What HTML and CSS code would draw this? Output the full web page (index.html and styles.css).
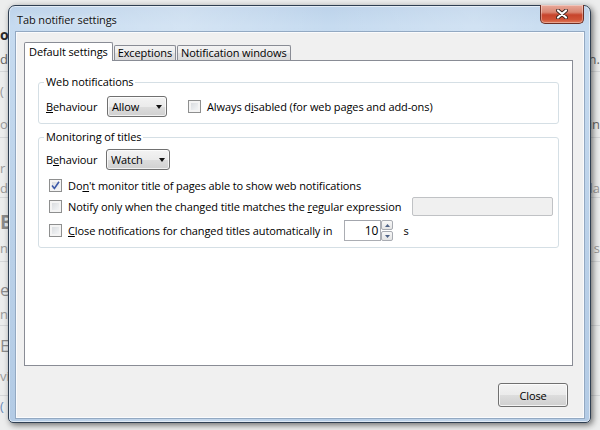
FILE: index.html
```html
<!DOCTYPE html>
<html lang="en">
<head>
<meta charset="utf-8">
<title>Tab notifier settings</title>
<link rel="stylesheet" href="styles.css">
</head>
<body>
<div class="desk">
  <div class="page">
    <div class="prow h24"></div>
    <div class="prow h22"><span class="pt strong">o</span><span></span></div>
    <div class="prow h26 line"><span class="pt">d</span><span class="pt">n.</span></div>
    <div class="prow h38"><span class="pt faint">(</span><span></span></div>
    <div class="prow h28 line"><span class="pt faint">ov</span><span class="pt">in</span></div>
    <div class="prow h20"></div>
    <div class="prow h20"><span class="pt faint">r</span><span></span></div>
    <div class="prow h20 line"><span class="pt faint">d</span><span class="pt faint">da</span></div>
    <div class="prow h12"></div>
    <div class="prow h24"><span class="pt big">Bi</span><span></span></div>
    <div class="prow h28 line"><span class="pt faint">n</span><span class="pt faint">s</span></div>
    <div class="prow h16"></div>
    <div class="prow h24"><span class="pt mid">e</span><span></span></div>
    <div class="prow h24 line"><span class="pt faint">n</span><span></span></div>
    <div class="prow h10"></div>
    <div class="prow h20"><span class="pt mid">E</span><span></span></div>
    <div class="prow h40 line"><span class="pt faint">vi</span><span></span></div>
    <div class="prow h20"><span class="pt link">(</span><span></span></div>
  </div>

  <div class="window">
    <div class="titlebar">
      <span class="title">Tab notifier settings</span>
      <button class="wclose" aria-label="Close">
        <svg width="12" height="10" viewBox="0 0 12 10">
          <path d="M2 1.5 L10 8.5 M10 1.5 L2 8.5" stroke="#3b2420" stroke-width="4" stroke-linecap="round"/>
          <path d="M2 1.5 L10 8.5 M10 1.5 L2 8.5" stroke="#ffffff" stroke-width="2.2" stroke-linecap="round"/>
        </svg>
      </button>
    </div>
    <div class="client">
      <div class="tabs">
        <div class="tab sel">Default settings</div>
        <div class="tab">Exceptions</div>
        <div class="tab">Notification windows</div>
      </div>
      <div class="panel">
        <fieldset class="group g1">
          <legend>Web notifications</legend>
          <div class="row first1">
            <span class="lbl"><u>B</u>ehaviour</span>
            <div class="select s-allow"><span>Allow</span><i class="arrow"></i></div>
            <label class="check push"><span class="box"></span><span>Always d<u>i</u>sabled (for web pages and add-ons)</span></label>
          </div>
        </fieldset>
        <fieldset class="group g2">
          <legend>Monitoring of titles</legend>
          <div class="row first2">
            <span class="lbl">B<u>e</u>haviour</span>
            <div class="select s-watch"><span>Watch</span><i class="arrow"></i></div>
          </div>
          <div class="row crow r1">
            <label class="check"><span class="box on">
              <svg width="9" height="9" viewBox="0 0 9 9"><path d="M1 4.6 L3.4 7.5 L8 0.8" fill="none" stroke="#3c59a8" stroke-width="1.6"/></svg>
            </span><span>Do<u>n</u>'t monitor title of pages able to show web notifications</span></label>
          </div>
          <div class="row crow r2">
            <label class="check"><span class="box"></span><span>Notify only when the changed title matches the <u>r</u>egular expression</span></label>
            <input class="regex" type="text" disabled>
          </div>
          <div class="row crow r3">
            <label class="check"><span class="box"></span><span><u>C</u>lose notifications for changed titles automatically in</span></label>
            <div class="spin">
              <span class="spinval">10</span>
              <span class="spinbtns">
                <span class="sb up"><svg width="5" height="3" viewBox="0 0 5 3"><path d="M0 3 L2.5 0 L5 3Z" fill="#4d6185"/></svg></span>
                <span class="sb down"><svg width="5" height="3" viewBox="0 0 5 3"><path d="M0 0 L2.5 3 L5 0Z" fill="#4d6185"/></svg></span>
              </span>
            </div>
            <span class="unit">s</span>
          </div>
        </fieldset>
      </div>
      <div class="footer">
        <button class="btn">Close</button>
      </div>
    </div>
  </div>
</div>
</body>
</html>
```

FILE: styles.css
```css
html, body {
  margin: 0;
  padding: 0;
}
body {
  width: 600px;
  height: 430px;
  overflow: hidden;
  font-family: "Open Sans", "Noto Sans", sans-serif;
  font-size: 11px;
  letter-spacing: -0.1px;
  color: #000;
}
.desk {
  position: relative;
  width: 600px;
  height: 430px;
  background: #eceded;
}

/* background page (only slivers visible) */
.page {
  display: flex;
  flex-direction: column;
  width: 600px;
  height: 430px;
  font-size: 13px;
  letter-spacing: 0;
  color: #666;
}
.prow {
  display: flex;
  justify-content: space-between;
  align-items: center;
  box-sizing: border-box;
}
.prow.line { border-bottom: 1px solid #d5d7d9; }
.h10 { height: 10px; } .h12 { height: 12px; } .h16 { height: 16px; }
.h20 { height: 20px; } .h22 { height: 22px; } .h24 { height: 24px; }
.h26 { height: 26px; } .h28 { height: 28px; } .h38 { height: 38px; }
.h40 { height: 40px; }
.pt { line-height: 16px; }
.pt.strong { font-weight: 700; color: #2a2a2a; font-size: 14px; }
.pt.faint { color: #9a9a9a; }
.pt.big { font-weight: 700; color: #8a8a8a; font-size: 19px; }
.pt.mid { color: #8c8c8c; font-size: 17px; }
.pt.link { color: #6a8ab8; }

/* window */
.window {
  position: absolute;
  left: 8px;
  top: 5px;
  width: 583px;
  height: 418px;
  box-sizing: border-box;
  border: 1px solid #2f3f52;
  border-radius: 7px 7px 5px 5px;
  background:
    linear-gradient(90deg, rgba(255,255,255,0) 0, rgba(255,255,255,.25) 30%, rgba(255,255,255,0) 55%, rgba(255,255,255,.2) 80%, rgba(255,255,255,0) 100%),
    linear-gradient(180deg, #bdd3ea 0, #c6dbf0 20px, #b9d0e8 60%, #b3cbe5 100%);
  padding: 0 6px 4px 7px;
  display: flex;
  flex-direction: column;
  box-shadow: 2px 2px 6px rgba(0,0,0,.55), inset 0 0 0 1px rgba(255,255,255,.55);
}
.titlebar {
  height: 26px;
  display: flex;
  justify-content: space-between;
  align-items: flex-start;
  flex: none;
}
.title {
  margin-top: 6px;
  margin-left: 1px;
  line-height: 15px;
  font-size: 11px;
  color: #111;
  text-shadow: 0 0 6px rgba(255,255,255,.9);
}
.wclose {
  margin-top: -1px;
  width: 44px;
  height: 19px;
  padding: 0;
  border: 1px solid #6d2f25;
  border-top: none;
  border-radius: 0 0 5px 5px;
  background: linear-gradient(180deg, #e9a99a 0, #d98672 40%, #c7442c 55%, #cf5236 80%, #e07a5a 100%);
  box-shadow: inset 0 0 0 1px rgba(255,255,255,.35);
  display: flex;
  align-items: center;
  justify-content: center;
}

.client {
  flex: 1;
  display: flex;
  flex-direction: column;
  background: #f0f0f0;
  border: 1px solid #fafbfd;
  box-shadow: 0 0 0 1px #93a9c2;
  padding: 9px 10px 0 7px;
}

/* tabs */
.tabs {
  display: flex;
  align-items: flex-end;
  height: 18px;
  flex: none;
}
.tab {
  box-sizing: border-box;
  height: 15px;
  line-height: 14px;
  padding: 0 3px;
  border: 1px solid #898c95;
  border-bottom: none;
  margin-left: 1px;
  background: linear-gradient(180deg, #f4f4f4 0, #ececec 50%, #e2e2e2 51%, #dadada 100%);
  border-radius: 2px 2px 0 0;
}
.tab.sel {
  height: 19px;
  line-height: 18px;
  margin-left: 0;
  margin-bottom: -1px;
  padding: 0 4px;
  background: #fff;
  position: relative;
  z-index: 1;
}

.panel {
  flex: 1;
  background: #fff;
  border: 1px solid #898c95;
  padding: 0 13px;
}

/* group boxes */
.group {
  border: 1px solid #d5dfe5;
  border-radius: 3px;
  margin: 0;
  padding: 0 5px 6px 7px;
}
.group legend {
  line-height: 16px;
  padding: 0 2px;
  margin-left: -2px;
}
.g1 { margin-top: 13px; }
.g2 { margin-top: 5px; }

.row {
  display: flex;
  align-items: center;
}
.first1 { margin-top: 6px; height: 21px; }
.first2 { margin-top: 4px; height: 21px; }
.lbl { width: 60px; flex: none; }
u { text-decoration-thickness: 1px; text-underline-offset: 1px; }

.select {
  box-sizing: border-box;
  height: 21px;
  border: 1px solid #707070;
  border-radius: 3px;
  background: linear-gradient(180deg, #f3f3f3 0, #ebebeb 50%, #dddddd 51%, #d0d0d0 100%);
  box-shadow: inset 0 0 0 1px rgba(255,255,255,.7);
  display: flex;
  align-items: center;
  justify-content: space-between;
  padding: 0 4px;
}
.s-allow { width: 60px; margin-left: 1px; }
.s-watch { width: 64px; }
.arrow {
  width: 0;
  height: 0;
  border-left: 3.5px solid transparent;
  border-right: 3.5px solid transparent;
  border-top: 4px solid #111;
  margin-top: 1px;
}

.check {
  display: flex;
  align-items: center;
}
.check.push { margin-left: 21px; }
.box {
  box-sizing: border-box;
  width: 13px;
  height: 13px;
  flex: none;
  border: 1px solid #8e8f8f;
  background: linear-gradient(135deg, #d3d6da 0, #eef0f2 70%, #f7f7f7 100%);
  box-shadow: inset 0 0 0 2px #f4f4f4;
  margin-right: 6px;
  display: flex;
  align-items: center;
  justify-content: center;
}
.crow .check { margin-left: 3px; }
.r1 { margin-top: 6px; height: 18px; }
.r2 { margin-top: 3px; height: 19px; }
.r3 { margin-top: 4px; height: 21px; }

.regex {
  box-sizing: border-box;
  margin: 0 0 0 auto;
  width: 141px;
  height: 19px;
  border: 1px solid #c0c2c5;
  border-radius: 2px;
  background: #f0f0f0;
  padding: 0;
}

.spin {
  margin-left: 12px;
  display: flex;
  height: 21px;
}
.spinval {
  box-sizing: border-box;
  width: 37px;
  height: 21px;
  border: 1px solid #abadb3;
  border-top-color: #a3a6ad;
  background: #fff;
  text-align: right;
  line-height: 19px;
  padding-right: 2px;
  font-size: 12px;
}
.spinbtns {
  display: flex;
  flex-direction: column;
  width: 12px;
}
.sb {
  box-sizing: border-box;
  height: 10px;
  border: 1px solid #a8abb2;
  border-radius: 2px;
  background: linear-gradient(180deg, #f8f8f8, #e4e4e4);
  display: flex;
  align-items: center;
  justify-content: center;
}
.sb.down { margin-top: 1px; }
.unit { margin-left: 10px; }

/* footer */
.footer {
  flex: none;
  display: flex;
  justify-content: flex-end;
  padding: 17px 5px 10px 0;
}
.btn {
  box-sizing: border-box;
  width: 70px;
  height: 24px;
  border: 1px solid #707070;
  border-radius: 3px;
  background: linear-gradient(180deg, #f3f3f3 0, #ebebeb 50%, #dddddd 51%, #cfcfcf 100%);
  box-shadow: inset 0 0 0 1px rgba(255,255,255,.75);
  font-family: "Open Sans", "Noto Sans", sans-serif;
  font-size: 11px;
  letter-spacing: -0.1px;
  color: #000;
  padding: 0;
}
```
